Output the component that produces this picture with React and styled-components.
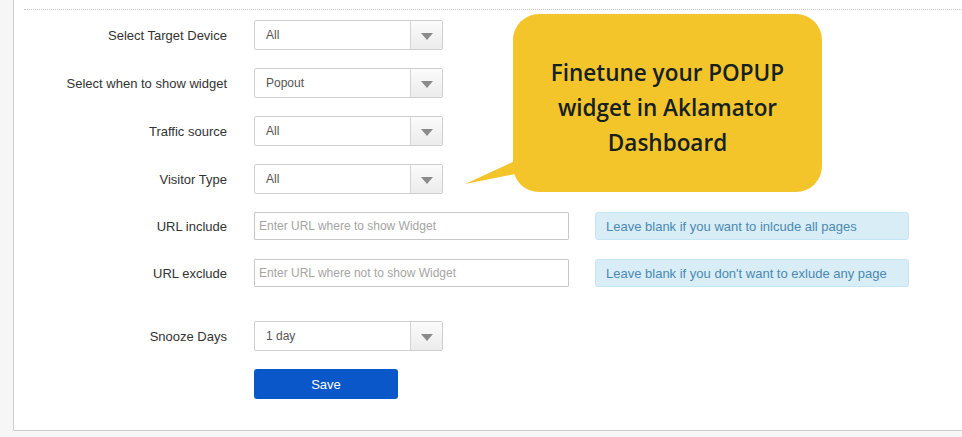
import React from "react"
import styled, { createGlobalStyle } from "styled-components"

const GlobalStyle = createGlobalStyle`
  html, body {
    margin: 0;
    padding: 0;
    background: #f6f6f6;
    font-family: "Liberation Sans", Arial, sans-serif;
  }
`

const selectRows = [
  { label: "Select Target Device", value: "All" },
  { label: "Select when to show widget", value: "Popout" },
  { label: "Traffic source", value: "All" },
  { label: "Visitor Type", value: "All" },
]

const urlRows = [
  {
    label: "URL include",
    placeholder: "Enter URL where to show Widget",
    help: "Leave blank if you want to inlcude all pages",
  },
  {
    label: "URL exclude",
    placeholder: "Enter URL where not to show Widget",
    help: "Leave blank if you don't want to exlude any page",
  },
]

const Select = ({ value }) => (
  <SelectBox>
    <SelectValue>{value}</SelectValue>
    <SelectArrow>
      <Caret />
    </SelectArrow>
  </SelectBox>
)

export default function App() {
  return (
    <Page>
      <GlobalStyle />
      <Panel>
        <Divider />
        <Form>
          {selectRows.map((row) => (
            <Row key={row.label} $mb={18}>
              <Label>{row.label}</Label>
              <Select value={row.value} />
            </Row>
          ))}
          {urlRows.map((row) => (
            <Row key={row.label} $mb={19}>
              <Label>{row.label}</Label>
              <UrlInput placeholder={row.placeholder} />
              <Help>{row.help}</Help>
            </Row>
          ))}
          <Row $mt={15} $mb={18}>
            <Label>Snooze Days</Label>
            <Select value="1 day" />
          </Row>
          <Row>
            <span />
            <SaveButton>Save</SaveButton>
          </Row>
        </Form>

        <Bubble>
          <BubbleTail viewBox="0 0 50 26" width="50" height="26">
            <polygon points="50,0 0,23 50,13" fill="#f4c52b" />
          </BubbleTail>
          Finetune your POPUP widget in Aklamator Dashboard
        </Bubble>
      </Panel>
    </Page>
  )
}

const Page = styled.div`
  width: 962px;
  height: 437px;
  overflow: hidden;
  padding-left: 13px;
  box-sizing: border-box;
`

const Panel = styled.div`
  position: relative;
  height: 431px;
  box-sizing: border-box;
  background: #fff;
  border: 1px solid #cfcfcf;
  border-top: none;
  border-right: none;
  padding: 9px 0 0 10px;
`

const Divider = styled.div`
  border-top: 1px dotted #c8c8c8;
  margin-bottom: 10px;
`

const Form = styled.div`
  display: flex;
  flex-direction: column;
`

const Row = styled.div`
  display: grid;
  grid-template-columns: 203px auto auto;
  justify-content: start;
  align-items: center;
  column-gap: 27px;
  margin-top: ${(p) => p.$mt || 0}px;
  margin-bottom: ${(p) => p.$mb || 0}px;
`

const Label = styled.label`
  text-align: right;
  font-size: 13px;
  color: #333;
`

const SelectBox = styled.div`
  display: flex;
  width: 189px;
  height: 30px;
  box-sizing: border-box;
  border: 1px solid #cfcfcf;
  border-radius: 2px;
  background: #fff;
`

const SelectValue = styled.div`
  flex: 1;
  display: flex;
  align-items: center;
  padding-left: 11px;
  font-size: 12px;
  color: #555;
`

const SelectArrow = styled.div`
  width: 31px;
  display: flex;
  align-items: center;
  justify-content: center;
  border-left: 1px solid #d4d4d4;
  background: linear-gradient(#fbfbfb, #ececec);
`

const Caret = styled.span`
  width: 0;
  height: 0;
  border-left: 6px solid transparent;
  border-right: 6px solid transparent;
  border-top: 7px solid #8a8a8a;
  margin-top: 2px;
`

const UrlInput = styled.input`
  width: 315px;
  height: 28px;
  box-sizing: border-box;
  border: 1px solid #c8c8c8;
  border-radius: 1px;
  padding: 0 4px;
  font-family: "Liberation Sans", Arial, sans-serif;
  font-size: 12px;
  outline: none;

  &::placeholder {
    color: #a5a5a5;
  }
`

const Help = styled.div`
  width: 314px;
  height: 28px;
  box-sizing: border-box;
  display: flex;
  align-items: center;
  padding-left: 10px;
  margin-left: -1px;
  background: #d9edf7;
  border: 1px solid #c6e5f2;
  border-radius: 3px;
  font-size: 13px;
  color: #4a89b0;
`

const SaveButton = styled.button`
  width: 144px;
  height: 30px;
  border: none;
  border-radius: 3px;
  background: #0a57c9;
  color: #fff;
  font-family: "Liberation Sans", Arial, sans-serif;
  font-size: 13px;
`

const Bubble = styled.div`
  position: absolute;
  left: 499px;
  top: 14px;
  width: 309px;
  height: 178px;
  box-sizing: border-box;
  padding: 8px 34px 0;
  display: flex;
  align-items: center;
  justify-content: center;
  text-align: center;
  background: #f4c52b;
  border-radius: 26px;
  font-family: "Open Sans", sans-serif;
  font-weight: 600;
  font-size: 22.5px;
  line-height: 35px;
  color: #14211f;
`

const BubbleTail = styled.svg`
  position: absolute;
  left: -48px;
  top: 147px;
`
